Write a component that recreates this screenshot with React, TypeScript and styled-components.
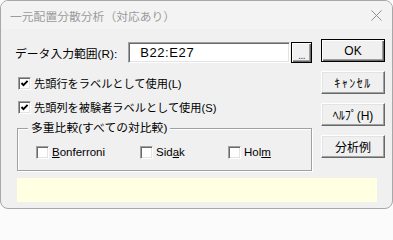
import React from "react";
import styled, { createGlobalStyle } from "styled-components";

const GlobalStyle = createGlobalStyle`
  html, body {
    margin: 0;
    padding: 0;
    background: #fbfbfb;
  }
  body {
    font-family: "Liberation Sans", "Noto Sans CJK JP", sans-serif;
  }
`;

const Dialog = styled.div`
  box-sizing: border-box;
  width: 393px;
  height: 209px;
  border: 1px solid #a8a8a8;
  border-radius: 8px;
  background: #f0f0f0;
  overflow: hidden;
  display: flex;
  flex-direction: column;
  font-size: 11.5px;
  color: #000;
`;

const TitleBar = styled.div`
  flex: none;
  height: 28px;
  display: flex;
  align-items: center;
  justify-content: space-between;
  padding: 0 10px 0 9px;
  background: #f3f3f3;
  color: #9b9b9b;
  font-size: 11.8px;
`;

const Body = styled.div`
  padding: 10px 0 0 16px;
`;

const TopSection = styled.div`
  display: flex;
  align-items: flex-start;
`;

const Main = styled.div`
  width: 295px;
  display: flex;
  flex-direction: column;
`;

const FieldRow = styled.div`
  margin-top: 3px;
  height: 21px;
  display: flex;
  align-items: center;
`;

const FieldLabel = styled.label`
  width: 114px;
  margin-left: -2px;
  white-space: nowrap;
  font-size: 11.8px;
`;

const RangeInput = styled.div`
  box-sizing: border-box;
  width: 163px;
  height: 21px;
  padding-left: 11px;
  display: flex;
  align-items: center;
  background: #fff;
  border: 1px solid;
  border-color: #a0a0a0 #fff #fff #a0a0a0;
  box-shadow: inset 1px 1px 0 #696969, inset -1px -1px 0 #e3e3e3;
  font-size: 13px;
  letter-spacing: 0.6px;
`;

const PickButton = styled.button`
  box-sizing: border-box;
  width: 21px;
  height: 21px;
  margin-left: 1px;
  padding: 0 0 3px;
  display: flex;
  align-items: flex-end;
  justify-content: center;
  background: #f0f0f0;
  border: 1px solid #000;
  box-shadow: inset 1px 1px 0 #fff, inset -1px -1px 0 #696969, inset -2px -2px 0 #a0a0a0;
  font: inherit;
  font-size: 10px;
  line-height: 6px;
  color: #1a3c8c;
  letter-spacing: -0.5px;
`;

const CheckRow = styled.label<{ $top: number }>`
  margin-top: ${(p) => p.$top}px;
  margin-left: 1px;
  height: 16px;
  display: flex;
  align-items: center;
  gap: 3px;
  white-space: nowrap;
  font-size: 11.2px;
`;

const Box = styled.span`
  box-sizing: border-box;
  flex: none;
  width: 13px;
  height: 13px;
  display: flex;
  align-items: center;
  justify-content: center;
  background: #fff;
  border: 1px solid;
  border-color: #a0a0a0 #fff #fff #a0a0a0;
  box-shadow: inset 1px 1px 0 #696969, inset -1px -1px 0 #e3e3e3;
`;

const Group = styled.fieldset`
  box-sizing: border-box;
  width: 295px;
  min-width: 0;
  margin: 5px 0 0;
  padding: 0;
  border: 1px solid #a0a0a0;
  box-shadow: 1px 1px 0 #fff, inset 1px 1px 0 #fff;
`;

const GroupTitle = styled.legend`
  margin-left: 10px;
  padding: 0 3px;
  line-height: 16px;
  font-size: 11.8px;
  background: #f0f0f0;
`;

const GroupRow = styled.div`
  margin: 8px 0 10px 18px;
  height: 16px;
  display: grid;
  grid-template-columns: 104px 88px auto;
  align-items: center;
`;

const GroupItem = styled.label`
  display: flex;
  align-items: center;
  gap: 3px;
  font-size: 11.5px;
`;

const ButtonColumn = styled.div`
  width: 64px;
  margin-left: 9px;
  display: flex;
  flex-direction: column;
  gap: 9px;
`;

const PushButton = styled.button<{ $default?: boolean; $tracking?: number }>`
  box-sizing: border-box;
  width: 64px;
  height: 23px;
  padding: 0;
  background: #f0f0f0;
  font: inherit;
  font-size: 12px;
  letter-spacing: ${(p) => p.$tracking ?? 0}px;
  color: #000;
  white-space: nowrap;
  border: 1px solid;
  border-color: ${(p) => (p.$default ? "#000" : "#fff #696969 #696969 #fff")};
  box-shadow: ${(p) =>
    p.$default
      ? "inset 1px 1px 0 #fff, inset -1px -1px 0 #696969, inset -2px -2px 0 #a0a0a0"
      : "inset -1px -1px 0 #a0a0a0, inset 1px 1px 0 #e3e3e3"};
`;

const StatusBar = styled.div`
  margin-top: 7px;
  width: 360px;
  height: 24px;
  background: #ffffe1;
`;

const CloseIcon = () => (
  <svg width="11" height="11" viewBox="0 0 11 11">
    <path d="M0.5 0.5 L10.5 10.5 M10.5 0.5 L0.5 10.5" stroke="#8e8e8e" strokeWidth="1" fill="none" />
  </svg>
);

const CheckBox: React.FC<{ checked?: boolean }> = ({ checked }) => (
  <Box>
    {checked && (
      <svg width="9" height="9" viewBox="0 0 9 9">
        <polyline points="1.5,4 3.5,6.2 7.6,1.8" fill="none" stroke="#000" strokeWidth="1.9" />
      </svg>
    )}
  </Box>
);

export default function App() {
  return (
    <>
      <GlobalStyle />
      <Dialog>
        <TitleBar>
          <span>一元配置分散分析（対応あり）</span>
          <CloseIcon />
        </TitleBar>
        <Body>
          <TopSection>
            <Main>
              <FieldRow>
                <FieldLabel>データ入力範囲(R):</FieldLabel>
                <RangeInput>B22:E27</RangeInput>
                <PickButton>...</PickButton>
              </FieldRow>
              <CheckRow $top={12}>
                <CheckBox checked />
                先頭行をラベルとして使用(L)
              </CheckRow>
              <CheckRow $top={8}>
                <CheckBox checked />
                先頭列を被験者ラベルとして使用(S)
              </CheckRow>
              <Group>
                <GroupTitle>多重比較(すべての対比較)</GroupTitle>
                <GroupRow>
                  <GroupItem>
                    <CheckBox />
                    <span>
                      <u>B</u>onferroni
                    </span>
                  </GroupItem>
                  <GroupItem>
                    <CheckBox />
                    <span>
                      Sid<u>a</u>k
                    </span>
                  </GroupItem>
                  <GroupItem>
                    <CheckBox />
                    <span>
                      Hol<u>m</u>
                    </span>
                  </GroupItem>
                </GroupRow>
              </Group>
            </Main>
            <ButtonColumn>
              <PushButton $default>OK</PushButton>
              <PushButton $tracking={1.5}>ｷｬﾝｾﾙ</PushButton>
              <PushButton>ﾍﾙﾌﾟ(H)</PushButton>
              <PushButton>分析例</PushButton>
            </ButtonColumn>
          </TopSection>
          <StatusBar />
        </Body>
      </Dialog>
    </>
  );
}
